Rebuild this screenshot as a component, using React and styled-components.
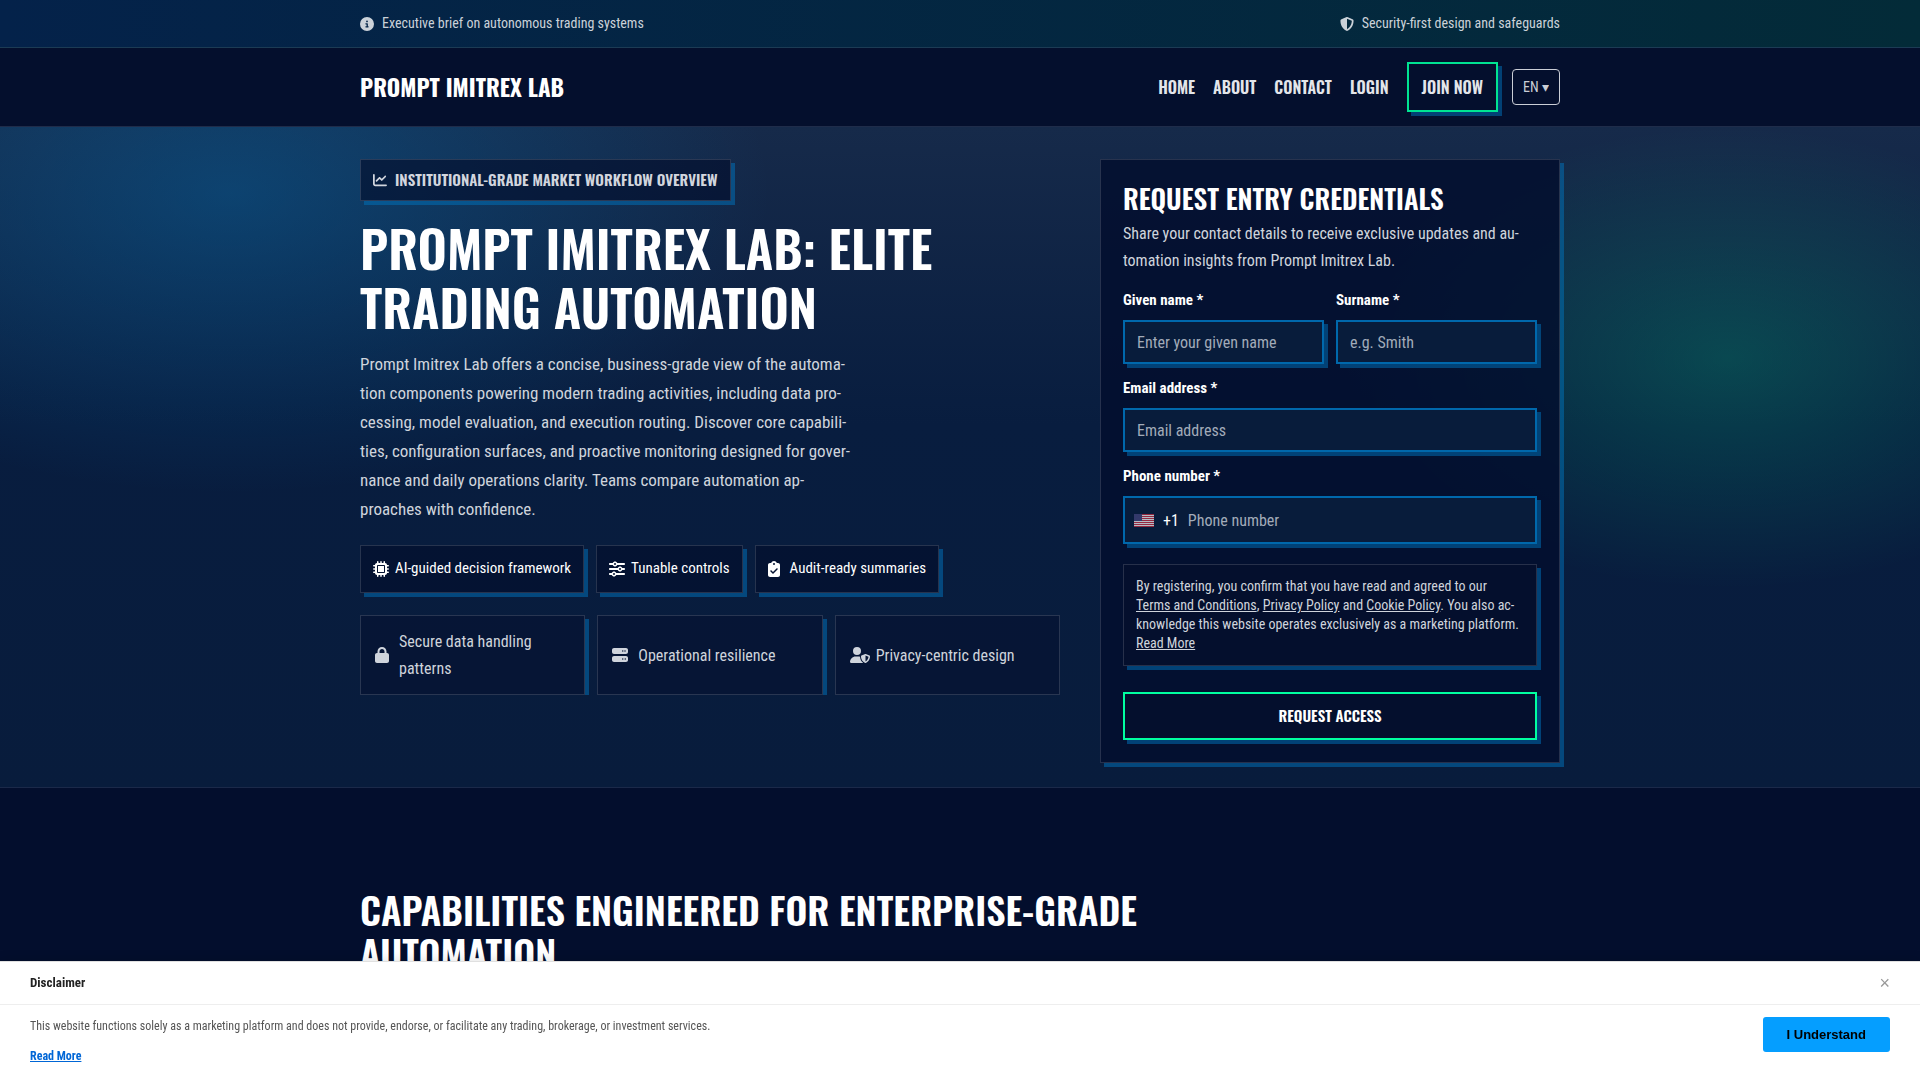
import React, { useState } from "react";
import styled, { createGlobalStyle } from "styled-components";
import {
  FaCircleInfo,
  FaShieldHalved,
  FaChartLine,
  FaMicrochip,
  FaSliders,
  FaClipboardCheck,
  FaLock,
  FaServer,
  FaUserShield,
} from "react-icons/fa6";

const chips = [
  { icon: FaMicrochip, width: 16, text: "AI-guided decision framework" },
  { icon: FaSliders, width: 16, text: "Tunable controls" },
  { icon: FaClipboardCheck, width: 12, text: "Audit-ready summaries" },
];

const features = [
  { icon: FaLock, width: 14, text: "Secure data handling patterns" },
  { icon: FaServer, width: 16, text: "Operational resilience" },
  { icon: FaUserShield, width: 20, text: "Privacy-centric design" },
];

const stripes = [0, 2, 4, 6, 8, 10, 12];

const UsFlag = () => (
  <Flag viewBox="0 0 20 13" aria-hidden="true">
    <rect width="20" height="13" fill="#fff" />
    {stripes.map((y) => (
      <rect key={y} y={y} width="20" height="1" fill="#d02f44" />
    ))}
    <rect width="8" height="7" fill="#46467f" />
  </Flag>
);

const App = () => {
  const [formData, setData] = useState({
    firstName: "",
    lastName: "",
    email: "",
    phone: "",
  });
  const [showNotice, setNotice] = useState(true);

  const handleInput = (e) => {
    const { name, value } = e.target;
    setData((prev) => ({ ...prev, [name]: value }));
  };

  return (
    <>
      <GlobalStyle />
      <TopBar>
        <TopInner>
          <TopNote>
            <FaCircleInfo />
            Executive brief on autonomous trading systems
          </TopNote>
          <TopNote>
            <FaShieldHalved />
            Security-first design and safeguards
          </TopNote>
        </TopInner>
      </TopBar>

      <Header>
        <HeaderInner>
          <Brand href="#">Prompt Imitrex Lab</Brand>
          <Nav>
            <NavLink href="#">Home</NavLink>
            <NavLink href="#about">About</NavLink>
            <NavLink href="#contact">Contact</NavLink>
            <NavLink href="#login">Login</NavLink>
            <JoinLink href="#form">Join now</JoinLink>
            <Language aria-label="Language" defaultValue="en">
              <option value="en">EN ▾</option>
            </Language>
          </Nav>
        </HeaderInner>
      </Header>

      <Hero>
        <HeroInner>
          <Intro>
            <Badge>
              <FaChartLine size={14} />
              Institutional-grade market workflow overview
            </Badge>
            <Title>Prompt Imitrex Lab: Elite Trading Automation</Title>
            <Lede>
              Prompt Imitrex Lab offers a concise, business-grade view of the
              automa&shy;tion components powering modern trading activities,
              including data pro&shy;cessing, model evaluation, and execution
              routing. Discover core capabili&shy;ties, configuration surfaces,
              and proactive monitoring designed for gover&shy;nance and daily
              operations clarity. Teams compare automation ap&shy;proaches with
              confidence.
            </Lede>
            <Chips>
              {chips.map(({ icon: Icon, width, text }) => (
                <Chip key={text}>
                  <ChipIcon $width={width}>
                    <Icon />
                  </ChipIcon>
                  {text}
                </Chip>
              ))}
            </Chips>
            <Features>
              {features.map(({ icon: Icon, width, text }) => (
                <Feature key={text}>
                  <FeatureIcon $width={width}>
                    <Icon />
                  </FeatureIcon>
                  {text}
                </Feature>
              ))}
            </Features>
          </Intro>

          <FormCard id="form" onSubmit={(e) => e.preventDefault()}>
            <FormTitle>Request entry credentials</FormTitle>
            <FormText>
              Share your contact details to receive exclusive updates and
              au&shy;tomation insights from Prompt Imitrex Lab.
            </FormText>
            <Fields>
              <Field>
                <Label htmlFor="firstName">Given name *</Label>
                <Input
                  id="firstName"
                  name="firstName"
                  placeholder="Enter your given name"
                  value={formData.firstName}
                  onChange={handleInput}
                />
              </Field>
              <Field>
                <Label htmlFor="lastName">Surname *</Label>
                <Input
                  id="lastName"
                  name="lastName"
                  placeholder="e.g. Smith"
                  value={formData.lastName}
                  onChange={handleInput}
                />
              </Field>
              <Field $wide>
                <Label htmlFor="email">Email address *</Label>
                <Input
                  id="email"
                  type="email"
                  name="email"
                  placeholder="Email address"
                  value={formData.email}
                  onChange={handleInput}
                />
              </Field>
              <Field $wide>
                <Label htmlFor="phone">Phone number *</Label>
                <PhoneBox>
                  <UsFlag />
                  <span>+1</span>
                  <PhoneInput
                    id="phone"
                    type="tel"
                    name="phone"
                    placeholder="Phone number"
                    value={formData.phone}
                    onChange={handleInput}
                  />
                </PhoneBox>
              </Field>
            </Fields>
            <Consent>
              By registering, you confirm that you have read and agreed to our{" "}
              <a href="#terms">Terms and Conditions</a>,{" "}
              <a href="#privacy">Privacy Policy</a> and{" "}
              <a href="#cookies">Cookie Policy</a>. You also ac&shy;knowledge
              this website operates exclusively as a marketing platform.{" "}
              <a href="#more">Read More</a>
            </Consent>
            <Submit type="submit">Request access</Submit>
          </FormCard>
        </HeroInner>
      </Hero>

      <Section>
        <Container>
          <SectionTitle>
            Capabilities engineered for enterprise-grade automation
          </SectionTitle>
        </Container>
      </Section>

      {showNotice && (
        <Notice>
          <NoticeHead>
            Disclaimer
            <CloseButton aria-label="Close" onClick={() => setNotice(false)}>
              ×
            </CloseButton>
          </NoticeHead>
          <NoticeBody>
            <div>
              <NoticeText>
                This website functions solely as a marketing platform and does
                not provide, endorse, or facilitate any trading, brokerage, or
                investment services.
              </NoticeText>
              <NoticeLink href="#disclaimer">Read More</NoticeLink>
            </div>
            <Accept onClick={() => setNotice(false)}>I Understand</Accept>
          </NoticeBody>
        </Notice>
      )}
    </>
  );
};

export default App;

const heading = `"Oswald", "Roboto Condensed", sans-serif`;
const body = `"Roboto Condensed", "Roboto", sans-serif`;
const line = "rgba(255, 255, 255, 0.14)";
const shadow = "4px 4px 0 rgba(0, 115, 190, 0.5)";

const GlobalStyle = createGlobalStyle`
  * {
    box-sizing: border-box;
  }
  html {
    scrollbar-width: none;
  }
  body {
    margin: 0;
    background: #030e2d;
    color: #fff;
    font-family: ${body};
    font-size: 16px;
    line-height: 27px;
  }
  h1, h2, p {
    margin: 0;
  }
  h1, h2 {
    font-family: ${heading};
    font-weight: 600;
    text-transform: uppercase;
  }
`;

const Container = styled.div`
  max-width: 1240px;
  margin: 0 auto;
  padding: 0 20px;
`;

const TopBar = styled.div`
  background: linear-gradient(90deg, #04224a, #032b38);
  border-bottom: 1px solid #1c3b54;
`;

const TopInner = styled(Container)`
  display: flex;
  justify-content: space-between;
  padding-top: 10px;
  padding-bottom: 10px;
`;

const TopNote = styled.span`
  display: flex;
  align-items: center;
  gap: 8px;
  font-size: 14px;
  color: #cbd2d9;
`;

const Header = styled.header`
  background: #040f2d;
  border-bottom: 1px solid #1f2c4a;
`;

const HeaderInner = styled(Container)`
  display: flex;
  align-items: center;
  justify-content: space-between;
  padding-top: 14px;
  padding-bottom: 14px;
`;

const Brand = styled.a`
  font-family: ${heading};
  font-size: 23px;
  font-weight: 700;
  text-transform: uppercase;
  text-decoration: none;
  color: #fff;
`;

const Nav = styled.nav`
  display: flex;
  align-items: center;
  gap: 18px;
`;

const NavLink = styled.a`
  font-family: ${heading};
  font-size: 16px;
  font-weight: 600;
  text-transform: uppercase;
  text-decoration: none;
  color: #e3e5ea;
`;

const JoinLink = styled(NavLink)`
  padding: 10px 13px;
  line-height: 26px;
  border: 2px solid #00e392;
  box-shadow: ${shadow};
`;

const Language = styled.select`
  appearance: none;
  margin-left: -4px;
  height: 36px;
  padding: 0 10px;
  background: transparent;
  border: 1px solid #cbced6;
  border-radius: 4px;
  color: #cbced6;
  font-family: ${body};
  font-size: 14px;
`;

const Hero = styled.section`
  background:
    radial-gradient(900px 500px at 12% 10%, rgba(0, 120, 190, 0.34), transparent 60%),
    radial-gradient(700px 420px at 90% 35%, rgba(0, 255, 150, 0.18), transparent 55%),
    linear-gradient(180deg, #162a4a, #081d3f 45%, #081c3c);
  border-bottom: 1px solid #1b2949;
`;

const HeroInner = styled(Container)`
  display: grid;
  grid-template-columns: minmax(0, 1fr) 460px;
  gap: 40px;
  align-items: start;
  padding-top: 32px;
  padding-bottom: 24px;

  @media (max-width: 900px) {
    grid-template-columns: 1fr;
  }
`;

const Intro = styled.div`
  display: flex;
  flex-direction: column;
  align-items: flex-start;
`;

const Badge = styled.div`
  display: flex;
  align-items: center;
  gap: 8px;
  padding: 6px 12px 7px;
  font-family: ${heading};
  font-size: 15px;
  font-weight: 600;
  text-transform: uppercase;
  color: #d2d6de;
  background: rgba(3, 14, 45, 0.65);
  border: 1px solid ${line};
  box-shadow: ${shadow};
`;

const Title = styled.h1`
  margin-top: 17px;
  font-size: 51px;
  line-height: 59px;
`;

const Lede = styled.p`
  max-width: 500px;
  margin-top: 14px;
  font-size: 17px;
  line-height: 29px;
  color: #cfd4dc;
`;

const Chips = styled.div`
  display: flex;
  flex-wrap: wrap;
  gap: 12px;
  margin-top: 21px;
`;

const Chip = styled.span`
  display: flex;
  align-items: center;
  gap: 6px;
  padding: 9px 12px 10px;
  font-size: 15px;
  background: rgba(3, 14, 45, 0.65);
  border: 1px solid ${line};
  box-shadow: ${shadow};
`;

const IconBox = styled.span`
  display: flex;
  font-size: 16px;

  svg {
    flex: none;
    width: ${(props) => props.$width}px;
  }
`;

const ChipIcon = styled(IconBox)`
  min-width: 16px;
`;

/* wide icons run into the gap so the labels stay in line */
const FeatureIcon = styled(IconBox)`
  max-width: 16px;
`;

const Features = styled.div`
  display: grid;
  grid-template-columns: repeat(3, 1fr);
  gap: 12px;
  width: 100%;
  margin-top: 22px;
  overflow: hidden;
`;

const Feature = styled.div`
  display: flex;
  align-items: center;
  gap: 10px;
  padding: 12px 14px;
  color: #cfd4dc;
  background: rgba(3, 14, 45, 0.5);
  border: 1px solid ${line};
  box-shadow: ${shadow};
`;

const FormCard = styled.form`
  padding: 22px;
  background: rgba(3, 14, 45, 0.82);
  border: 1px solid ${line};
  box-shadow: ${shadow};
`;

const FormTitle = styled.h2`
  font-size: 27px;
  line-height: 32px;
`;

const FormText = styled.p`
  margin-top: 6px;
  color: #cfd4dc;
`;

const Fields = styled.div`
  display: grid;
  grid-template-columns: 1fr 1fr;
  gap: 12px;
  margin-top: 14px;
`;

const Field = styled.div`
  display: flex;
  flex-direction: column;
  gap: 8px;
  min-width: 0;
  grid-column: ${(props) => (props.$wide ? "1 / -1" : "auto")};
`;

const Label = styled.label`
  font-size: 15px;
  font-weight: 700;
  line-height: 24px;
`;

const Input = styled.input`
  width: 100%;
  height: 44px;
  padding: 0 12px;
  background: #081c3b;
  border: 2px solid #0068ac;
  box-shadow: ${shadow};
  color: #fff;
  font-family: ${body};
  font-size: 16px;

  &::placeholder {
    color: #a2abb9;
  }
`;

const PhoneBox = styled.div`
  display: flex;
  align-items: center;
  gap: 9px;
  height: 48px;
  padding: 0 9px;
  background: #081c3b;
  border: 2px solid #0068ac;
  box-shadow: ${shadow};
`;

const Flag = styled.svg`
  width: 20px;
  height: 13px;
  opacity: 0.7;
`;

const PhoneInput = styled(Input)`
  flex: 1;
  width: auto;
  height: 40px;
  padding: 0;
  background: transparent;
  border: 0;
  box-shadow: none;
`;

const Consent = styled.p`
  margin-top: 20px;
  padding: 12px;
  font-size: 14px;
  line-height: 19px;
  color: #cfd4dc;
  border: 1px solid ${line};
  box-shadow: ${shadow};
  background: #040f2d;

  a {
    color: inherit;
  }
`;

const Submit = styled.button`
  width: 100%;
  height: 48px;
  margin-top: 26px;
  padding: 0 0 2px;
  background: #040f2d;
  border: 2px solid #00ffa0;
  box-shadow: ${shadow};
  color: #fff;
  font-family: ${heading};
  font-size: 15px;
  font-weight: 600;
  text-transform: uppercase;
  cursor: pointer;
`;

const Section = styled.section`
  padding: 100px 0;
`;

const SectionTitle = styled.h2`
  max-width: 860px;
  font-size: 38px;
  line-height: 43px;
`;

const Notice = styled.aside`
  position: fixed;
  left: 0;
  right: 0;
  bottom: 0;
  background: #fff;
  border-top: 1px solid #e0e0e0;
  box-shadow: 0 -2px 10px rgba(0, 0, 0, 0.1);
  color: #222;
`;

const NoticeHead = styled.div`
  display: flex;
  align-items: center;
  justify-content: space-between;
  padding: 7px 30px 8px;
  font-size: 13px;
  font-weight: 700;
  border-bottom: 1px solid #eee;
`;

const CloseButton = styled.button`
  padding: 0;
  background: none;
  border: 0;
  color: #999;
  font-family: "Liberation Sans", sans-serif;
  font-size: 18px;
  line-height: 20px;
  cursor: pointer;
`;

const NoticeBody = styled.div`
  display: flex;
  align-items: flex-start;
  justify-content: space-between;
  padding: 12px 30px 14px;
`;

const NoticeText = styled.p`
  margin-bottom: 10px;
  font-size: 12px;
  line-height: 19px;
  color: #555;
`;

const NoticeLink = styled.a`
  display: block;
  width: fit-content;
  font-size: 12px;
  font-weight: 700;
  line-height: 20px;
  color: #0066d6;
`;

const Accept = styled.button`
  flex: none;
  height: 35px;
  padding: 0 24px;
  background: #059eff;
  border: 0;
  border-radius: 3px;
  color: #000;
  font-family: "Liberation Sans", sans-serif;
  font-size: 13px;
  font-weight: 700;
  cursor: pointer;
`;
